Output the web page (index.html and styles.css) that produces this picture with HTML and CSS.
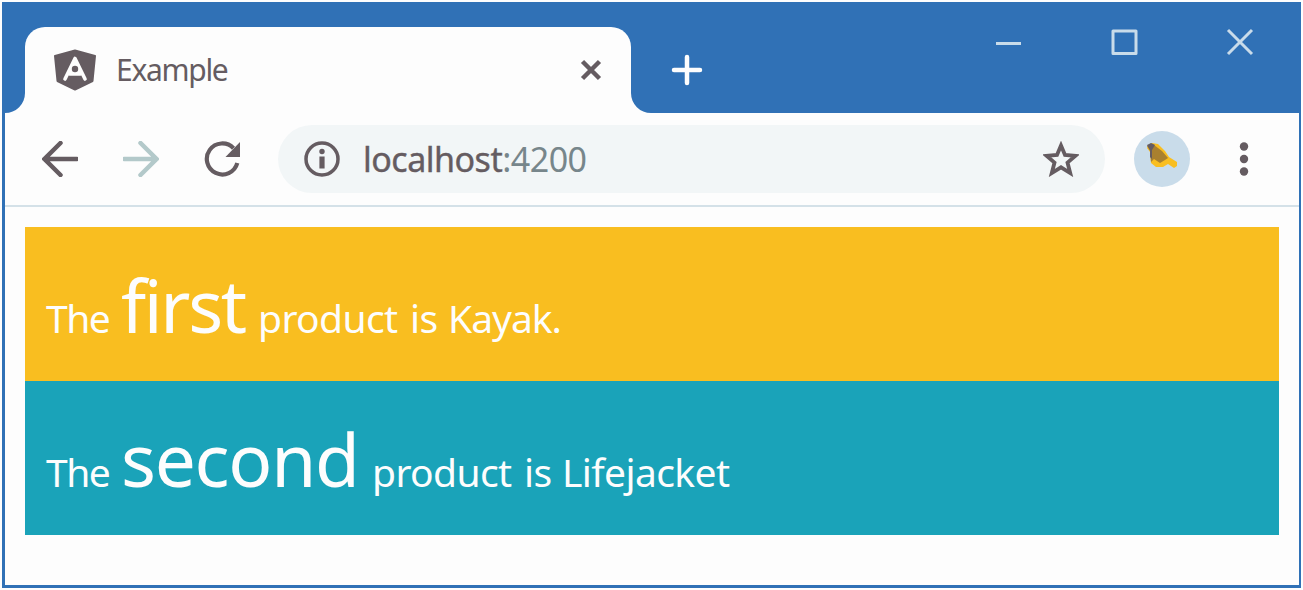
FILE: index.html
```html
<!DOCTYPE html>
<html lang="en">
<head>
<meta charset="utf-8">
<title>Example</title>
<link rel="stylesheet" href="styles.css">
</head>
<body>
<div class="window">
  <header class="titlebar">
    <svg class="foot" viewBox="0 0 20 20"><path d="M20 0A20 20 0 0 1 0 20H20Z"/></svg>
    <div class="tab">
      <svg class="logo" viewBox="0 0 42 42"><path fill="#655c61" stroke="#655c61" stroke-width="2" stroke-linejoin="round" d="M21 1.500 41 7 38.500 32 21 40.500 3.500 32 1 7Z"/><path fill="none" stroke="#fdfdfd" stroke-width="3.600" stroke-linecap="round" stroke-linejoin="round" d="M11 30 21 9.500 31 30M15.500 25H26.500"/><path fill="#fdfdfd" d="M21 8 28 25H14Z"/><circle cx="21" cy="20" r="3.200" fill="#655c61"/></svg>
      <span class="tab-title">Example</span>
      <svg class="tab-close" viewBox="0 0 22 22"><path d="M2.500 2.500 19.500 19.500M19.500 2.500 2.500 19.500"/></svg>
    </div>
    <svg class="foot" viewBox="0 0 20 20"><path d="M0 0A20 20 0 0 0 20 20H0Z"/></svg>
    <svg class="new-tab" viewBox="0 0 32 32"><path d="M16 3V29M3 16H29"/></svg>
    <div class="controls">
      <svg viewBox="0 0 28 28"><path d="M2 15.500H27"/></svg>
      <svg viewBox="0 0 28 28"><path stroke-linejoin="round" d="M3 3H26V25.500H3Z"/></svg>
      <svg viewBox="0 0 28 28"><path d="M2 2 26 26M26 2 2 26"/></svg>
    </div>
  </header>
  <nav class="toolbar">
    <svg class="arrow" viewBox="0 0 36 36"><path d="M18.500 2 2.500 18 18.500 34M2.500 18H35"/></svg>
    <svg class="arrow forward" viewBox="0 0 36 36"><path d="M17.500 2 33.500 18 17.500 34M33.500 18H1"/></svg>
    <svg class="reload" viewBox="0 0 36 36"><path fill="none" stroke="#655c61" stroke-width="4.200" d="M29.500 7.200A15.500 15.500 0 1 0 33.300 22"/><path d="M36 1V16H21.500Z"/></svg>
    <div class="address">
      <svg class="info" viewBox="0 0 36 36"><circle cx="18" cy="18" r="16" fill="none" stroke="#655c61" stroke-width="3.500"/><circle cx="18" cy="10.500" r="2.700"/><path d="M15.400 15.500H20.600V27.500H15.400Z"/></svg>
      <span class="url"><span class="host">localhost</span><span class="port">:4200</span></span>
      <svg class="star" viewBox="0 0 36 36"><path d="M18 4.500 22 14 32.500 14.800 24.500 21.600 27.200 32 18 26.300 8.800 32 11.500 21.600 3.500 14.800 14 14Z"/></svg>
    </div>
    <div class="avatar"><svg viewBox="0 0 32 28"><path fill="#f9be20" d="M2 4 6 1 12 2 19 9 23 15 31 20 31 24 28 26 22 22 17 25 10 25 5 21 4 10 1 6Z"/><path fill="#a9802f" d="M1 4 5 1.500 8 3 16 9 22 16 19 18 14 21 8 17 5 20 4 9Z"/><path fill="#655c61" d="M1 3 5 1 9 3 6 8 6 17 4 15 4 8Z"/></svg></div>
    <svg class="menu" viewBox="0 0 10 36"><circle cx="5" cy="5.500" r="4.200"/><circle cx="5" cy="18" r="4.200"/><circle cx="5" cy="30.500" r="4.200"/></svg>
  </nav>
  <main class="page">
    <p class="product first"><span class="w the">The</span> <span class="w ordinal">first</span> <span class="w noun">product</span> <span class="w is">is</span> <span class="w name">Kayak.</span></p>
    <p class="product second"><span class="w the">The</span> <span class="w ordinal">second</span> <span class="w noun">product</span> <span class="w is">is</span> <span class="w name">Lifejacket</span></p>
  </main>
</div>
</body>
</html>
```
FILE: styles.css
```css
* { box-sizing: border-box; }
body {
  margin: 0;
  padding: 2px;
  height: 590px;
  overflow: hidden;
  background: #fdfdfd;
  font-family: "Noto Sans", "Open Sans", sans-serif;
  color: #655c61;
}
svg { display: block; flex: none; fill: #655c61; }
.window {
  width: 1299px;
  height: 586px;
  border: solid #3071b6;
  border-width: 0 2px 3px 3px;
}
.titlebar {
  display: flex;
  align-items: flex-end;
  height: 111px;
  background: #3071b6;
}
.foot { width: 20px; height: 20px; fill: #fdfdfd; }
.tab {
  display: flex;
  align-items: center;
  width: 606px;
  height: 86px;
  padding: 0 29px;
  border-radius: 20px 20px 0 0;
  background: #fdfdfd;
}
.logo { width: 42px; height: 42px; }
.tab-title {
  margin-left: 20px;
  font-size: 30px;
  letter-spacing: -1.3px;
  line-height: 40px;
}
.tab-close { width: 22px; height: 22px; margin-left: auto; stroke: #655c61; stroke-width: 4.5; }
.new-tab {
  width: 32px;
  height: 32px;
  margin: 0 0 27px 20px;
  fill: none;
  stroke: #fdfdfd;
  stroke-width: 4.5;
  stroke-linecap: round;
}
.controls { display: flex; gap: 88px; margin: 0 45px 57px auto; }
.controls svg { width: 28px; height: 28px; fill: none; stroke: #c9dcea; stroke-width: 3; }
.toolbar {
  display: flex;
  align-items: center;
  height: 94px;
  padding: 0 0 1px 37px;
  border-bottom: 2px solid #d4e1e8;
}
.arrow { width: 36px; height: 36px; fill: none; stroke: #655c61; stroke-width: 4.5; stroke-linecap: round; }
.forward { margin-left: 45px; stroke: #b3c9ca; }
.reload { width: 36px; height: 36px; margin-left: 45px; }
.address {
  display: flex;
  align-items: center;
  width: 827px;
  height: 68px;
  margin-left: 38px;
  padding: 0 26px;
  border-radius: 34px;
  background: #f2f6f7;
}
.info { width: 36px; height: 36px; }
.url { margin-left: 23px; font-size: 34px; line-height: 44px; letter-spacing: -0.5px; }
.host { -webkit-text-stroke: 0.4px #655c61; }
.port { color: #77868b; }
.star { width: 36px; height: 36px; margin-left: auto; fill: none; stroke: #655c61; stroke-width: 3.8; }
.avatar {
  display: flex;
  align-items: center;
  justify-content: center;
  width: 56px;
  height: 56px;
  margin-left: 29px;
  border-radius: 50%;
  background: #c9dcea;
}
.avatar svg { width: 32px; height: 28px; margin-bottom: 5px; }
.menu { width: 10px; height: 36px; margin-left: 49px; }
.page { padding: 20px 20px 0 20px; }
.product {
  display: flex;
  align-items: baseline;
  height: 154px;
  margin: 0;
  padding: 23px 21px 0;
  color: #fdfdfd;
  font-size: 39px;
  line-height: 110px;
  letter-spacing: -0.6px;
}
.first { background: #f9be20; }
.second { background: #1aa3b9; }
.w { flex: none; white-space: nowrap; }
.the { width: 75px; letter-spacing: -1.5px; }
.ordinal { font-size: 73px; letter-spacing: -1.3px; }
.first .ordinal { width: 137px; letter-spacing: -2.3px; }
.second .ordinal { width: 251px; }
.noun { width: 152px; }
.is { width: 38px; }
.first .name { letter-spacing: -1px; }
```
